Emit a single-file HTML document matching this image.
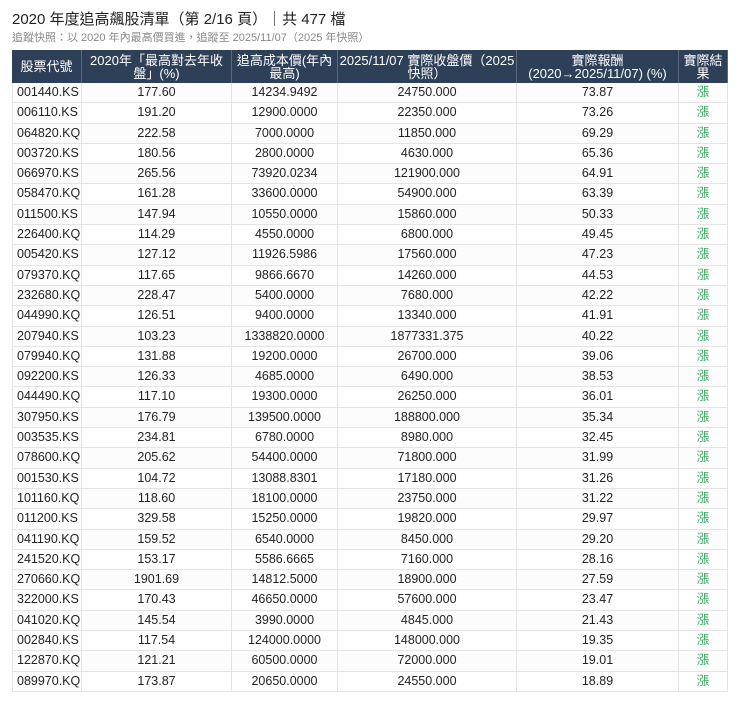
<!DOCTYPE html>
<html><head><meta charset="utf-8"><style>
body{margin:0;background:#fff;font-family:"Liberation Sans","Noto Sans CJK TC",sans-serif;color:#222;}
.t{position:absolute;left:12px;top:8px;font-size:15px;color:#222;}
.s{position:absolute;left:12px;top:29px;font-size:11px;color:#888;}
.tb{position:absolute;left:12px;top:50px;width:715px;font-size:12.5px;border-left:1px solid #e4e4e4;}
.r{display:flex;height:20.3px;box-sizing:border-box;border-bottom:1px solid #e4e4e4;}
.r:nth-child(odd){background:#fcfcfc;}
.r>div{box-sizing:border-box;border-right:1px solid #e4e4e4;text-align:center;line-height:19px;overflow:hidden;white-space:nowrap;}
.r>div:first-child{text-align:left;padding-left:4px;}
.r>div:last-child{color:#3aa561;}
.h{display:flex;height:33px;background:#2e4057;color:#fff;font-size:13px;line-height:13px;margin-left:-1px;}
.h>div{box-sizing:border-box;border-right:1px solid #5a6a7c;display:flex;align-items:center;justify-content:center;text-align:center;padding:0 1px;}
.c1{width:69px}.c2{width:150px}.c3{width:106px}.c4{width:179px}.c5{width:162px}.c6{width:49px}
</style></head><body>
<div class="t">2020 年度追高飆股清單（第 2/16 頁）｜共 477 檔</div>
<div class="s">追蹤快照：以 2020 年內最高價買進，追蹤至 2025/11/07（2025 年快照）</div>
<div class="tb">
<div class="h"><div class="c1" style="width:70px">股票代號</div><div class="c2">2020年「最高對去年收<br>盤」(%)</div><div class="c3">追高成本價(年內<br>最高)</div><div class="c4">2025/11/07 實際收盤價（2025<br>快照）</div><div class="c5">實際報酬<br>(2020→2025/11/07) (%)</div><div class="c6">實際結<br>果</div></div>
<div id="rows">
<div class="r"><div class="c1">001440.KS</div><div class="c2">177.60</div><div class="c3">14234.9492</div><div class="c4">24750.000</div><div class="c5">73.87</div><div class="c6">漲</div></div>
<div class="r"><div class="c1">006110.KS</div><div class="c2">191.20</div><div class="c3">12900.0000</div><div class="c4">22350.000</div><div class="c5">73.26</div><div class="c6">漲</div></div>
<div class="r"><div class="c1">064820.KQ</div><div class="c2">222.58</div><div class="c3">7000.0000</div><div class="c4">11850.000</div><div class="c5">69.29</div><div class="c6">漲</div></div>
<div class="r"><div class="c1">003720.KS</div><div class="c2">180.56</div><div class="c3">2800.0000</div><div class="c4">4630.000</div><div class="c5">65.36</div><div class="c6">漲</div></div>
<div class="r"><div class="c1">066970.KS</div><div class="c2">265.56</div><div class="c3">73920.0234</div><div class="c4">121900.000</div><div class="c5">64.91</div><div class="c6">漲</div></div>
<div class="r"><div class="c1">058470.KQ</div><div class="c2">161.28</div><div class="c3">33600.0000</div><div class="c4">54900.000</div><div class="c5">63.39</div><div class="c6">漲</div></div>
<div class="r"><div class="c1">011500.KS</div><div class="c2">147.94</div><div class="c3">10550.0000</div><div class="c4">15860.000</div><div class="c5">50.33</div><div class="c6">漲</div></div>
<div class="r"><div class="c1">226400.KQ</div><div class="c2">114.29</div><div class="c3">4550.0000</div><div class="c4">6800.000</div><div class="c5">49.45</div><div class="c6">漲</div></div>
<div class="r"><div class="c1">005420.KS</div><div class="c2">127.12</div><div class="c3">11926.5986</div><div class="c4">17560.000</div><div class="c5">47.23</div><div class="c6">漲</div></div>
<div class="r"><div class="c1">079370.KQ</div><div class="c2">117.65</div><div class="c3">9866.6670</div><div class="c4">14260.000</div><div class="c5">44.53</div><div class="c6">漲</div></div>
<div class="r"><div class="c1">232680.KQ</div><div class="c2">228.47</div><div class="c3">5400.0000</div><div class="c4">7680.000</div><div class="c5">42.22</div><div class="c6">漲</div></div>
<div class="r"><div class="c1">044990.KQ</div><div class="c2">126.51</div><div class="c3">9400.0000</div><div class="c4">13340.000</div><div class="c5">41.91</div><div class="c6">漲</div></div>
<div class="r"><div class="c1">207940.KS</div><div class="c2">103.23</div><div class="c3">1338820.0000</div><div class="c4">1877331.375</div><div class="c5">40.22</div><div class="c6">漲</div></div>
<div class="r"><div class="c1">079940.KQ</div><div class="c2">131.88</div><div class="c3">19200.0000</div><div class="c4">26700.000</div><div class="c5">39.06</div><div class="c6">漲</div></div>
<div class="r"><div class="c1">092200.KS</div><div class="c2">126.33</div><div class="c3">4685.0000</div><div class="c4">6490.000</div><div class="c5">38.53</div><div class="c6">漲</div></div>
<div class="r"><div class="c1">044490.KQ</div><div class="c2">117.10</div><div class="c3">19300.0000</div><div class="c4">26250.000</div><div class="c5">36.01</div><div class="c6">漲</div></div>
<div class="r"><div class="c1">307950.KS</div><div class="c2">176.79</div><div class="c3">139500.0000</div><div class="c4">188800.000</div><div class="c5">35.34</div><div class="c6">漲</div></div>
<div class="r"><div class="c1">003535.KS</div><div class="c2">234.81</div><div class="c3">6780.0000</div><div class="c4">8980.000</div><div class="c5">32.45</div><div class="c6">漲</div></div>
<div class="r"><div class="c1">078600.KQ</div><div class="c2">205.62</div><div class="c3">54400.0000</div><div class="c4">71800.000</div><div class="c5">31.99</div><div class="c6">漲</div></div>
<div class="r"><div class="c1">001530.KS</div><div class="c2">104.72</div><div class="c3">13088.8301</div><div class="c4">17180.000</div><div class="c5">31.26</div><div class="c6">漲</div></div>
<div class="r"><div class="c1">101160.KQ</div><div class="c2">118.60</div><div class="c3">18100.0000</div><div class="c4">23750.000</div><div class="c5">31.22</div><div class="c6">漲</div></div>
<div class="r"><div class="c1">011200.KS</div><div class="c2">329.58</div><div class="c3">15250.0000</div><div class="c4">19820.000</div><div class="c5">29.97</div><div class="c6">漲</div></div>
<div class="r"><div class="c1">041190.KQ</div><div class="c2">159.52</div><div class="c3">6540.0000</div><div class="c4">8450.000</div><div class="c5">29.20</div><div class="c6">漲</div></div>
<div class="r"><div class="c1">241520.KQ</div><div class="c2">153.17</div><div class="c3">5586.6665</div><div class="c4">7160.000</div><div class="c5">28.16</div><div class="c6">漲</div></div>
<div class="r"><div class="c1">270660.KQ</div><div class="c2">1901.69</div><div class="c3">14812.5000</div><div class="c4">18900.000</div><div class="c5">27.59</div><div class="c6">漲</div></div>
<div class="r"><div class="c1">322000.KS</div><div class="c2">170.43</div><div class="c3">46650.0000</div><div class="c4">57600.000</div><div class="c5">23.47</div><div class="c6">漲</div></div>
<div class="r"><div class="c1">041020.KQ</div><div class="c2">145.54</div><div class="c3">3990.0000</div><div class="c4">4845.000</div><div class="c5">21.43</div><div class="c6">漲</div></div>
<div class="r"><div class="c1">002840.KS</div><div class="c2">117.54</div><div class="c3">124000.0000</div><div class="c4">148000.000</div><div class="c5">19.35</div><div class="c6">漲</div></div>
<div class="r"><div class="c1">122870.KQ</div><div class="c2">121.21</div><div class="c3">60500.0000</div><div class="c4">72000.000</div><div class="c5">19.01</div><div class="c6">漲</div></div>
<div class="r"><div class="c1">089970.KQ</div><div class="c2">173.87</div><div class="c3">20650.0000</div><div class="c4">24550.000</div><div class="c5">18.89</div><div class="c6">漲</div></div>
</div>
</div>
</body></html>
